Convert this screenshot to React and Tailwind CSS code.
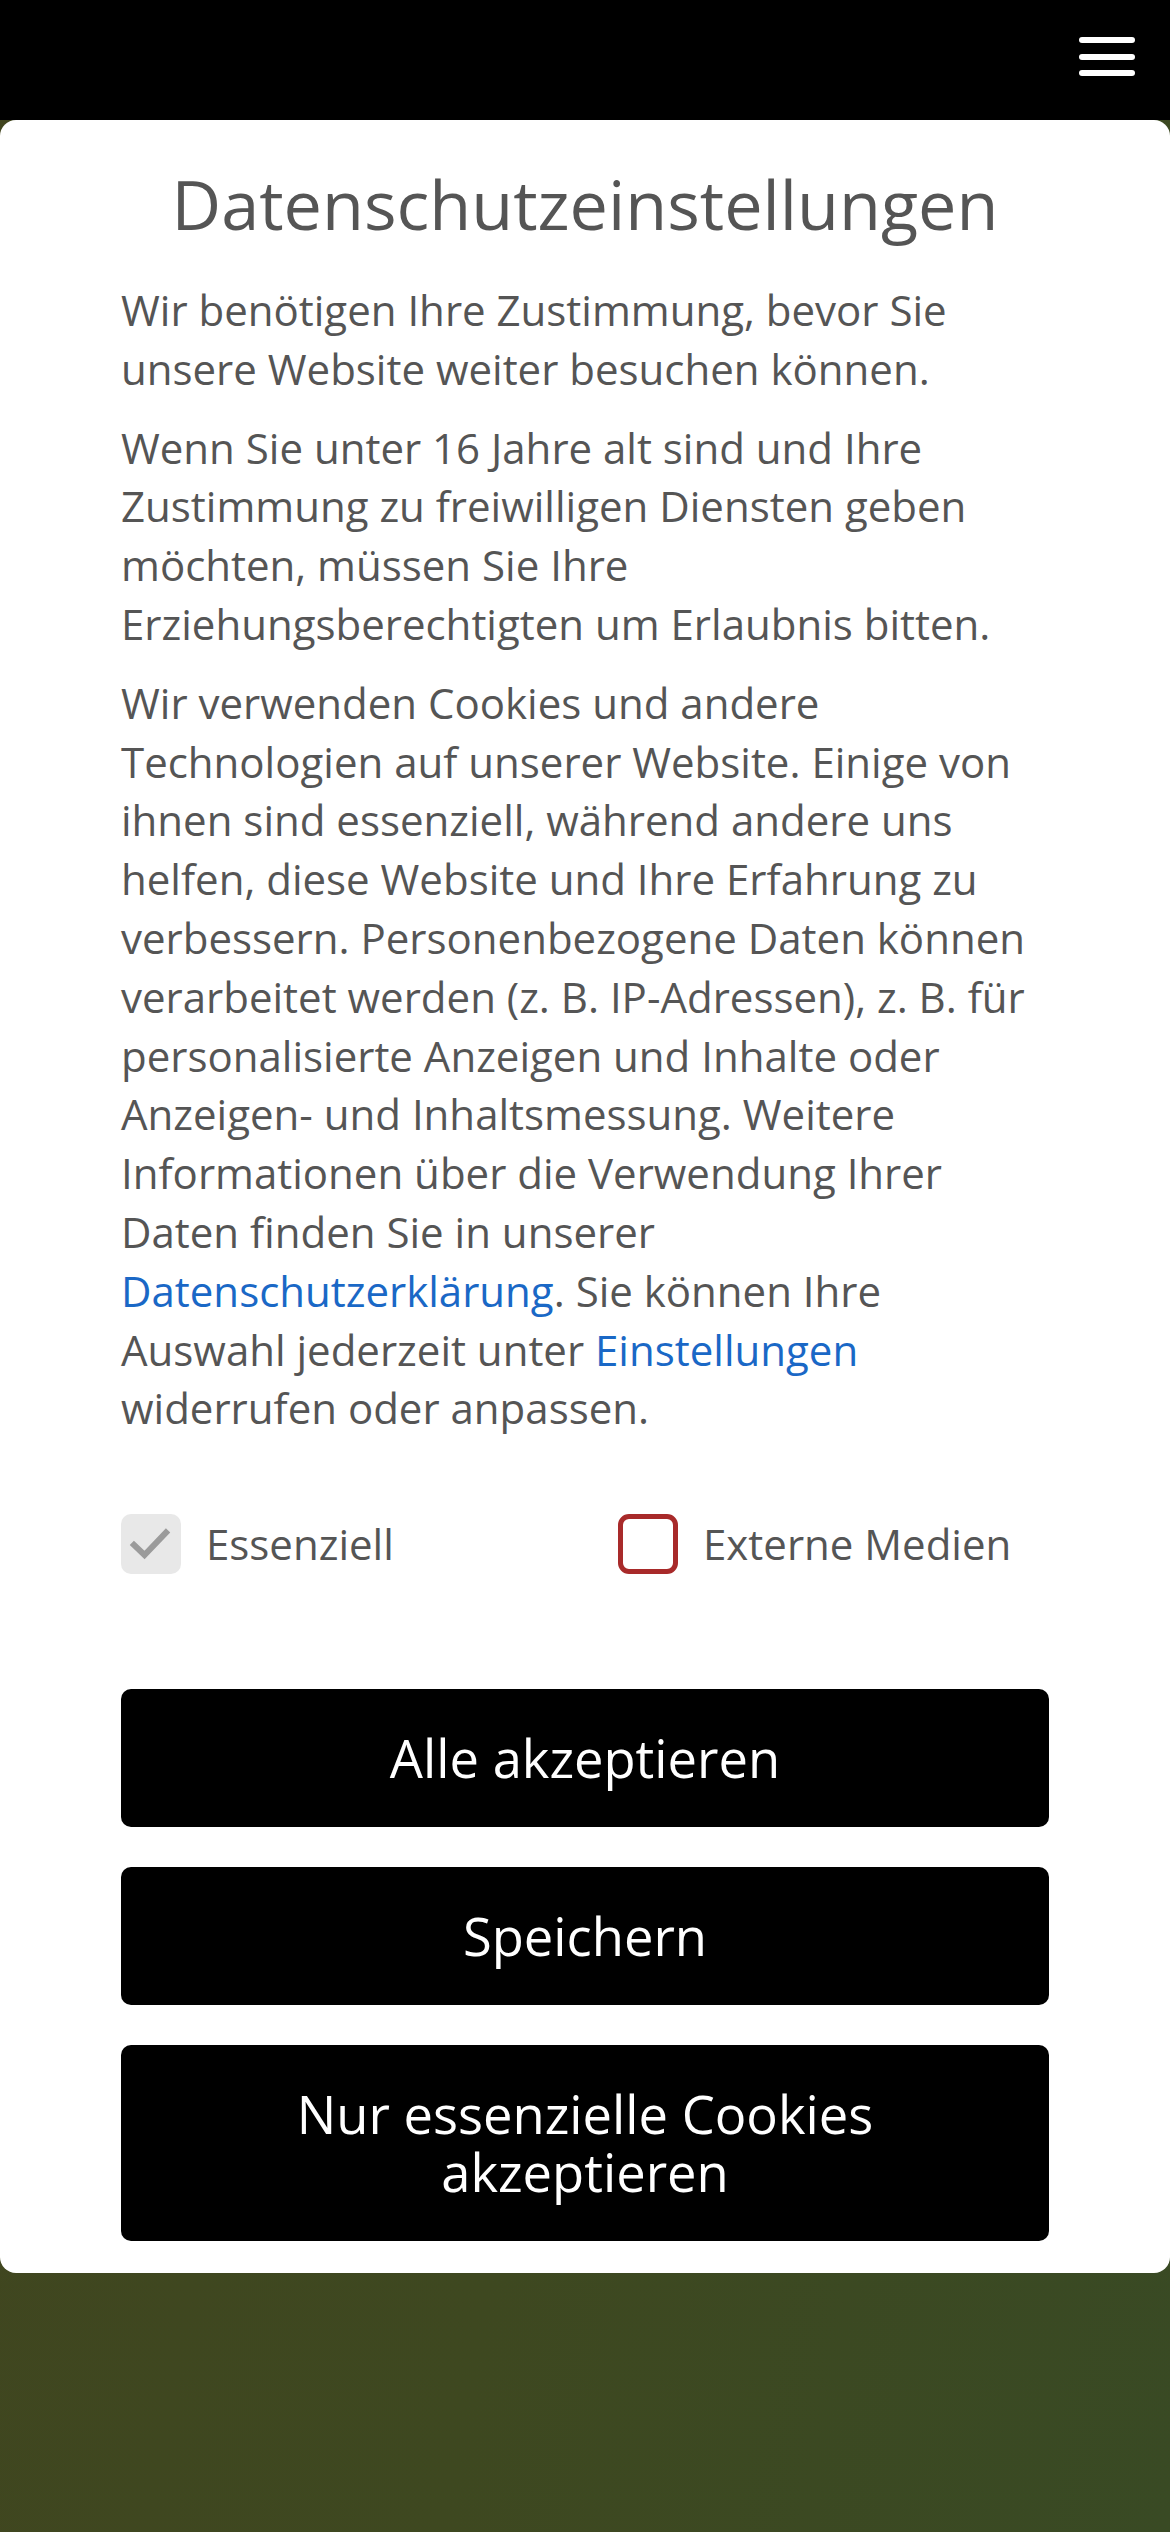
import React from "react";

export default function App() {
  const font = { fontFamily: '"Open Sans", "Noto Sans", sans-serif' };
  return (
    <div
      className="w-[1170px] h-[2532px] overflow-hidden bg-[linear-gradient(100deg,#41451f_0%,#3e4820_55%,#394a24_100%)] flex flex-col"
      style={font}
    >
      <header className="h-[120px] shrink-0 bg-black flex items-start justify-end pr-[35px] pt-[37px]">
        <div className="flex flex-col gap-[10.5px]">
          <span className="block w-[56px] h-[6px] rounded-full bg-white" />
          <span className="block w-[56px] h-[6px] rounded-full bg-white" />
          <span className="block w-[56px] h-[6px] rounded-full bg-white" />
        </div>
      </header>

      <div className="bg-white rounded-[16px] px-[121px] pt-[34px] pb-[32px] text-[#555555]">
        <h1 className="text-center text-[68.4px] leading-[100px] font-normal text-[#555555]">
          Datenschutzeinstellungen
        </h1>
        <div className="mt-[27px] text-[42px] leading-[58.8px] flex flex-col gap-[20px]">
          <p>Wir benötigen Ihre Zustimmung, bevor Sie unsere Website weiter besuchen können.</p>
          <p>
            Wenn Sie unter 16 Jahre alt sind und Ihre Zustimmung zu freiwilligen Diensten geben
            möchten, müssen Sie Ihre Erziehungsberechtigten um Erlaubnis bitten.
          </p>
          <p>
            Wir verwenden Cookies und andere Technologien auf unserer Website. Einige von ihnen sind
            essenziell, während andere uns helfen, diese Website und Ihre Erfahrung zu verbessern.
            Personenbezogene Daten können verarbeitet werden (z. B. IP-Adressen), z. B. für
            personalisierte Anzeigen und Inhalte oder Anzeigen- und Inhaltsmessung. Weitere
            Informationen über die Verwendung Ihrer Daten finden Sie in unserer{" "}
            <a className="text-[#1a68c6]">Datenschutzerklärung</a>. Sie können Ihre Auswahl
            jederzeit unter <a className="text-[#1a68c6]">Einstellungen</a> widerrufen oder
            anpassen.
          </p>
        </div>

        <div className="mt-[76px] flex items-center text-[42px] leading-[58px]">
          <label className="w-[497px] flex items-center gap-[25px]">
            <span className="w-[60px] h-[60px] rounded-[10px] bg-[#e8e8e8] flex items-center justify-center">
              <svg width="60" height="60" viewBox="0 0 60 60">
                <path
                  d="M13 31 L23.5 41 L45 18.5"
                  fill="none"
                  stroke="#9b9b9b"
                  strokeWidth="6"
                  strokeLinecap="square"
                />
              </svg>
            </span>
            <span>Essenziell</span>
          </label>
          <label className="flex items-center gap-[25px]">
            <span className="w-[60px] h-[60px] rounded-[11px] border-[5px] border-[#a82a2a] bg-white" />
            <span>Externe Medien</span>
          </label>
        </div>

        <div className="mt-[115px] flex flex-col gap-[40px] text-white text-[52.5px] leading-[58px]">
          <button className="w-full bg-black rounded-[10px] py-[40px] text-center">Alle akzeptieren</button>
          <button className="w-full bg-black rounded-[10px] py-[40px] text-center">Speichern</button>
          <button className="w-full bg-black rounded-[10px] py-[40px] px-[60px] text-center">
            Nur essenzielle Cookies akzeptieren
          </button>
        </div>
      </div>
    </div>
  );
}
